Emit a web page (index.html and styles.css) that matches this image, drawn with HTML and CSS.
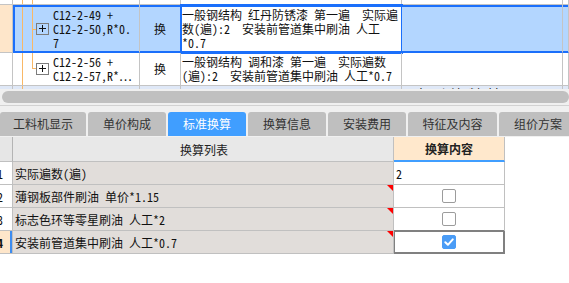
FILE: index.html
```html
<!DOCTYPE html>
<html>

<head>
    <title> 标准换算 </title>
    <link rel="stylesheet" href="styles.css">
</head>

<body>
    <div class="top">
        <div class="row r0">
            <div class="c c0"></div>
            <div class="c c1 tree"></div>
            <div class="c c2"></div>
            <div class="c c3"></div>
            <div class="c c4"></div>
            <div class="c c5"></div>
        </div>
        <div class="row r1 sel">
            <div class="c c0"></div>
            <div class="c c1 tree branch-mid">
                <span class="exp"></span>
                <span class="code">C12-2-49 +<br>C12-2-50,R*0.<br>7</span>
            </div>
            <div class="c c2">换</div>
            <div class="c c3 cur"><span class="desc">一般钢结构 红丹防锈漆 第一遍  实际遍<br>数(遍):2  安装前管道集中刷油 人工<br>*0.7</span></div>
            <div class="c c4"></div>
            <div class="c c5"></div>
        </div>
        <div class="row r2">
            <div class="c c0"></div>
            <div class="c c1 tree branch-end">
                <span class="exp"></span>
                <span class="code">C12-2-56 +<br>C12-2-57,R*…</span>
            </div>
            <div class="c c2">换</div>
            <div class="c c3"><span class="desc">一般钢结构 调和漆 第一遍  实际遍数<br>(遍):2  安装前管道集中刷油 人工*0.7</span></div>
            <div class="c c4"></div>
            <div class="c c5"></div>
        </div>
        <div class="row r3">
            <div class="c c0"></div>
            <div class="c c1 tree-one"></div>
            <div class="c c2"></div>
            <div class="c c3"></div>
            <div class="c c4"><span class="desc">  土 刷 油 料 材</span></div>
            <div class="c c5"></div>
        </div>
    </div>

    <div class="hscroll">
        <div class="thumb"></div>
    </div>

    <div class="tabs">
        <div class="tab wide-first">工料机显示</div>
        <div class="tab">单价构成</div>
        <div class="tab active">标准换算</div>
        <div class="tab">换算信息</div>
        <div class="tab">安装费用</div>
        <div class="tab wide">特征及内容</div>
        <div class="tab">组价方案</div>
    </div>

    <div class="list">
        <div class="lrow head">
            <div class="n"></div>
            <div class="name">换算列表</div>
            <div class="val">换算内容</div>
        </div>
        <div class="lrow">
            <div class="n"><span>1</span></div>
            <div class="name">实际遍数(遍)</div>
            <div class="val text">2</div>
        </div>
        <div class="lrow">
            <div class="n"><span>2</span></div>
            <div class="name mark">薄钢板部件刷油 单价*1.15</div>
            <div class="val"><span class="cb"></span></div>
        </div>
        <div class="lrow">
            <div class="n"><span>3</span></div>
            <div class="name mark">标志色环等零星刷油 人工*2</div>
            <div class="val"><span class="cb"></span></div>
        </div>
        <div class="lrow cur-row">
            <div class="n"><span>4</span></div>
            <div class="name mark">安装前管道集中刷油 人工*0.7</div>
            <div class="val focus">
                <span class="cb on">
                    <svg width="14" height="14" viewBox="0 0 14 14">
                        <path d="M3.3 7.3 L5.9 9.8 L10.8 4.4" fill="none" stroke="#fff" stroke-width="2" stroke-linecap="round" stroke-linejoin="round" />
                    </svg>
                </span>
            </div>
        </div>
    </div>
</body>

</html>
```

FILE: styles.css
```css
body {
    margin: 0;
    background: #fff;
    color: #111;
    font: 12px "Noto Sans Mono CJK SC", "Noto Sans CJK SC", monospace;
}

/* upper grid */

.top {
    height: 89px;
    overflow: hidden;
}

.row {
    display: grid;
    grid-template-columns: 13px 127px 41px 221px 161px 1fr;
}

.c {
    box-sizing: border-box;
    border-right: 1px solid #c4c4c4;
    border-bottom: 1px solid #c4c4c4;
    display: flex;
    align-items: center;
    white-space: pre;
    line-height: 14px;
}

.r0 {
    height: 5px;
}

.r1 {
    height: 48px;
}

.r2 {
    height: 33px;
}

.r3 {
    height: 30px;
}

.r3 .c {
    background-color: #dfe8f7;
    align-items: flex-start;
    padding-top: 1px;
}

.r1 .c0 {
    background: #fee6ca;
}

.sel .c:not(.c0) {
    background-color: #b3d6ff;
    border-bottom-color: #1a6ffb;
    box-shadow: inset 0 2px #1a6ffb, inset 0 -1px #1a6ffb;
}

.sel .c1 {
    box-shadow: inset 2px 0 #1a6ffb, inset 0 2px #1a6ffb, inset 0 -1px #1a6ffb !important;
}

.sel .cur {
    background-color: #fff !important;
    outline: 2px solid #1a6ffb;
    outline-offset: -1px;
}

.tree,
.tree-one {
    background-image: linear-gradient(#f9b866, #f9b866), linear-gradient(#f9b866, #f9b866);
    background-size: 1px 100%, 1px 100%;
    background-position: 9px 0, 19px 0;
    background-repeat: no-repeat;
}

.tree-one {
    background-size: 1px 100%, 0 0;
}

.tree.branch-mid {
    background-image: linear-gradient(#f9b866, #f9b866), linear-gradient(#f9b866, #f9b866), linear-gradient(#f9b866, #f9b866);
    background-size: 1px 100%, 1px 100%, 5px 1px;
    background-position: 9px 0, 19px 0, 19px 24px;
}

.tree.branch-end {
    background-image: linear-gradient(#f9b866, #f9b866), linear-gradient(#f9b866, #f9b866), linear-gradient(#f9b866, #f9b866);
    background-size: 1px 100%, 1px 16px, 5px 1px;
    background-position: 9px 0, 19px 0, 19px 15px;
}

.exp {
    flex: none;
    width: 13px;
    height: 12px;
    margin-left: 23px;
    box-sizing: border-box;
    border: 1px solid #7c7c7c;
    background-image: linear-gradient(#111, #111), linear-gradient(#111, #111);
    background-size: 7px 1px, 1px 7px;
    background-position: 2px 4px, 5px 1px;
    background-repeat: no-repeat;
}

.code {
    margin-left: 4px;
}

.c2 {
    justify-content: center;
}

.desc {
    padding-left: 1px;
}

/* scroll + tabs */

.hscroll {
    height: 14px;
    padding: 2px 0 0 2px;
    background: #f0f0f0;
    border-bottom: 1px solid #d2d2d2;
}

.thumb {
    height: 12px;
    border-radius: 6px;
    background: #c0c0c0;
}

.tabs {
    display: flex;
    gap: 2px;
    padding: 6px 0 1px;
    background: #f0f0f0;
    font-family: "Noto Sans CJK SC", sans-serif;
}

.tab {
    flex: none;
    width: 78px;
    height: 24px;
    line-height: 24px;
    text-align: center;
    background: #bfbfbf;
    color: #333;
    border-radius: 3px 3px 0 0;
}

.tab.wide-first {
    width: 86px;
}

.tab.wide {
    width: 89px;
}

.tab.active {
    background: #409eff;
    color: #fff;
}

/* lower list */

.list {
    width: 505px;
}

.lrow {
    display: grid;
    grid-template-columns: 13px 381px 111px;
    height: 23px;
}

.lrow>div {
    box-sizing: border-box;
    border-right: 1px solid #c0c0c0;
    border-bottom: 1px solid #c0c0c0;
    display: flex;
    align-items: center;
    white-space: pre;
}

.lrow.head {
    height: 25px;
    font-family: "Noto Sans CJK SC", sans-serif;
    color: #222;
}

.head .n {
    background: #e6e6e6;
    border-right-color: #b4b4b4;
}

.head .name {
    background: #e8e8e8;
    justify-content: center;
}

.head .val {
    background: #ffe8cc;
    justify-content: center;
    font-weight: bold;
    border-bottom: 2px solid #409eff;
}

.n {
    overflow: hidden;
    background: #fff;
}

.n span {
    margin-left: -3px;
}

.cur-row .n {
    background: #fee6ca;
    box-shadow: inset -2px 0 #3c8cf0;
    font-weight: bold;
}

.name {
    position: relative;
    background: #e1ddda;
    padding-left: 2px;
}

.name.mark::after {
    content: "";
    position: absolute;
    top: 0;
    right: 0;
    border-top: 6px solid #f00;
    border-left: 6px solid transparent;
}

.val {
    background: #fff;
    justify-content: center;
}

.val.text {
    justify-content: flex-start;
    padding-left: 2px;
}

.val.focus {
    border-right-color: #808080 !important;
    border-bottom-color: #808080 !important;
    box-shadow: inset 0 0 0 1px #808080, -1px -1px 0 0 #808080;
}

.cb {
    width: 14px;
    height: 14px;
    box-sizing: border-box;
    border: 1px solid #9c9c9c;
    border-radius: 2px;
    background: #fff;
    display: flex;
}

.cb.on {
    border-color: #4a9cf6;
    background: #4a9cf6;
}

.cb svg {
    margin: -1px;
}
```
